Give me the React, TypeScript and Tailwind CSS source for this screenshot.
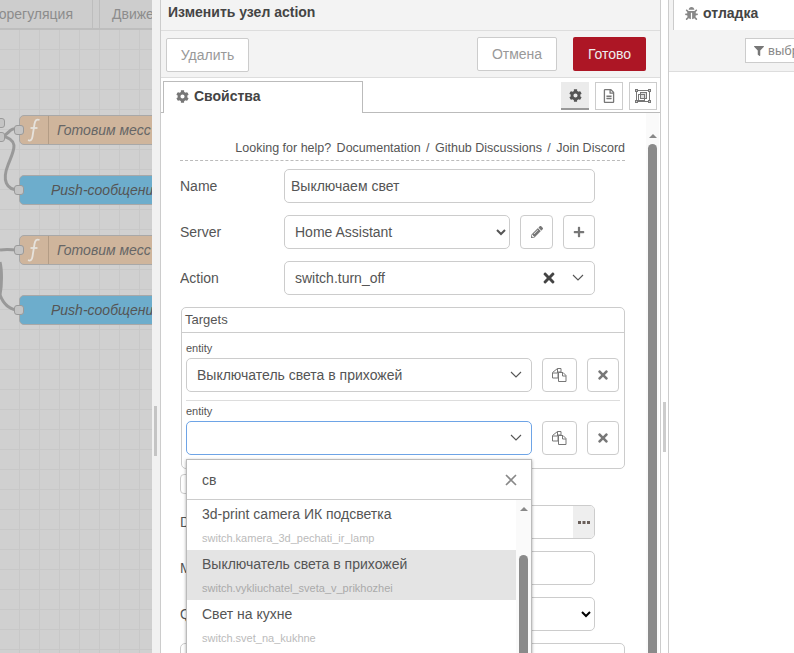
import { FaCog, FaBug, FaFilter, FaPencilAlt, FaPlus, FaTimes, FaRegFileAlt } from "react-icons/fa";

function Chevron() {
  return (
    <svg width="12" height="8" viewBox="0 0 12 8" fill="none" stroke="#555" strokeWidth="1.1">
      <path d="M1 1l5 5 5-5" />
    </svg>
  );
}

function CopyIcon() {
  return (
    <svg width="15" height="14" viewBox="0 0 15 14" fill="none" stroke="#777" strokeWidth="1">
      <path d="M5.5 0.5h3.5v3.5h-3v6h-5.5v-5.5z" />
      <path d="M1 5h4.5v-4.5" />
      <path d="M6.5 4.5h4.5l3 3v6h-7.500z" />
      <path d="M10.500 4.500v3.500h3.500" />
    </svg>
  );
}

function Dots() {
  return (
    <svg width="12" height="3" viewBox="0 0 12 3" fill="#6a5f5a">
      <rect x="0" y="0" width="3" height="3" />
      <rect x="4.500" y="0" width="3" height="3" />
      <rect x="9" y="0" width="3" height="3" />
    </svg>
  );
}

function Arrow() {
  return <div className="w-0 h-0 border-l-[4px] border-r-[4px] border-b-[4px] border-l-transparent border-r-transparent border-b-[#888]" />;
}

function Port({ className }: { className: string }) {
  return <div className={`absolute w-[10px] h-[10px] rounded-[3px] bg-[#c4c4c4] border border-[#9a9a9a] ${className}`} />;
}

function FnIcon() {
  return (
    <svg width="14" height="24" viewBox="0 0 14 24" fill="none" stroke="#e6e2dc" strokeWidth="1.8">
      <path d="M12.500 2C9.500 0.800 8 2.500 7.500 6L5.500 18.500C5 22 3.500 23.200 1 22.200" />
      <path d="M3.500 10H10.500" />
    </svg>
  );
}

function FnNode({ top }: { top: string }) {
  return (
    <div className={`absolute left-[19px] ${top} w-[160px] h-[30px] rounded-[5px] border border-[#a8a8a8] bg-[#cfb59c] flex items-center`}>
      <div className="w-[29px] h-full border-r border-[#b39c85] flex items-center justify-center"><FnIcon /></div>
      <span className="ml-[8px] italic text-[14px] text-[#666] whitespace-nowrap">Готовим месс</span>
    </div>
  );
}

function PushNode({ top }: { top: string }) {
  return (
    <div className={`absolute left-[19px] ${top} w-[160px] h-[30px] rounded-[5px] border border-[#a8a8a8] bg-[#6dadcc] flex items-center`}>
      <span className="ml-[31px] italic text-[14px] text-[#555] whitespace-nowrap">Push-сообщени</span>
    </div>
  );
}

function Canvas() {
  return (
    <div className="relative w-[152px] h-full shrink-0 overflow-hidden bg-[#d0d0d0]">
      <div className="h-[30px] flex bg-[#cdcdcd] border-b-2 border-[#bdbdbd] text-[14px] text-[#8c8c8c]">
        <div className="w-[93px] h-full border-r border-[#bdbdbd] flex items-center justify-end pr-[19px] whitespace-nowrap overflow-hidden">орегуляция</div>
        <div className="w-[6px]" />
        <div className="flex-1 h-full border-l border-[#bdbdbd] flex items-center pl-[12px] whitespace-nowrap overflow-hidden">Движе</div>
      </div>
      <div className="absolute left-0 right-0 top-[30px] bottom-0 bg-[linear-gradient(to_right,transparent_19px,#c8c8c8_19px,#c8c8c8_20px,transparent_20px),linear-gradient(to_bottom,transparent_19px,#c8c8c8_19px,#c8c8c8_20px,transparent_20px)] bg-[length:20px_20px]" />
      <svg className="absolute left-0 top-0" width="152" height="653" fill="none" stroke="#999" strokeWidth="3">
        <path d="M0 137C8 137 10 125 19 130" />
        <path d="M2 136C20 140 14 150 8 165C2 180 6 190 19 190" />
        <path d="M0 250C8 249 12 250 19 250" />
        <path d="M0 295C4 305 10 310 19 310" />
        <path d="M0 262C2 270 2 285 0 295" />
      </svg>
      <FnNode top="top-[115px]" />
      <PushNode top="top-[175px]" />
      <FnNode top="top-[235px]" />
      <PushNode top="top-[295px]" />
      <Port className="left-[-5px] top-[118px]" />
      <Port className="left-[-5px] top-[132px]" />
      <Port className="left-[14px] top-[125px]" />
      <Port className="left-[14px] top-[185px]" />
      <Port className="left-[14px] top-[245px]" />
      <Port className="left-[14px] top-[305px]" />
    </div>
  );
}

function Field({ label, children }: { label: string; children: React.ReactNode }) {
  return (
    <div className="flex h-[34px] mb-[12px] items-center shrink-0">
      <div className="w-[104px] shrink-0 text-[14px] text-[#555] whitespace-nowrap overflow-hidden">{label}</div>
      {children}
    </div>
  );
}

function IconBtn({ w, children }: { w: string; children: React.ReactNode }) {
  return <div className={`${w} h-[34px] shrink-0 bg-white border border-[#ccc] rounded-[4px] flex items-center justify-center text-[#777]`}>{children}</div>;
}

function EntityRow({ focus, value }: { focus?: boolean; value?: string }) {
  return (
    <div className="flex items-center">
      <div className={`w-[346px] h-[34px] rounded-[5px] border ${focus ? "border-[#6ea4e6]" : "border-[#ccc]"} flex items-center justify-between pl-[10px] pr-[9px] text-[14px] text-[#555]`}>
        <span>{value}</span>
        <Chevron />
      </div>
      <div className="ml-[10px]"><IconBtn w="w-[35px]"><CopyIcon /></IconBtn></div>
      <div className="ml-[10px]"><IconBtn w="w-[32px]"><FaTimes size={14} /></IconBtn></div>
    </div>
  );
}

function Option({ title, sub, active }: { title: string; sub: string; active?: boolean }) {
  return (
    <div className={`h-[50px] pl-[15px] pt-[5px] shrink-0 ${active ? "bg-[#e4e4e4]" : ""}`}>
      <div className="text-[14px] leading-[18px] text-[#555] whitespace-nowrap">{title}</div>
      <div className={`text-[11px] leading-[14px] mt-[8px] whitespace-nowrap ${active ? "text-[#aaa]" : "text-[#bbb]"}`}>{sub}</div>
    </div>
  );
}

function ThinTimes() {
  return (
    <svg width="14" height="14" viewBox="0 0 14 14" stroke="#888" strokeWidth="1.6" fill="none">
      <path d="M2 2l10 10M12 2L2 12" />
    </svg>
  );
}

function Dropdown() {
  return (
    <div className="absolute left-[25px] top-[346px] w-[346px] h-[210px] bg-white border border-[#bbb] shadow-[0_1px_3px_rgba(0,0,0,0.35)] flex flex-col z-10">
      <div className="h-[40px] shrink-0 border-b border-[#ccc] flex items-center justify-between pl-[15px] pr-[13px] pt-[1px] text-[14px] text-[#555]">
        <span>св</span>
        <ThinTimes />
      </div>
      <div className="flex flex-1 min-h-0">
        <div className="flex-1 flex flex-col min-w-0">
          <Option title="3d-print camera ИК подсветка" sub="switch.kamera_3d_pechati_ir_lamp" />
          <Option title="Выключатель света в прихожей" sub="switch.vykliuchatel_sveta_v_prikhozhei" active />
          <Option title="Свет на кухне" sub="switch.svet_na_kukhne" />
        </div>
        <div className="w-[15px] shrink-0 bg-[#fafafa] flex flex-col items-center pt-[7px]">
          <Arrow />
          <div className="w-[9px] flex-1 mt-[44px] rounded-t-[5px] bg-[#8a8a8a]" />
        </div>
      </div>
    </div>
  );
}

function Form() {
  return (
    <div className="relative flex-1 min-h-0 overflow-hidden bg-white flex">
      <div className="w-[485px] shrink-0 pl-[19px] flex flex-col">
        <div className="h-[48px] w-[445px] shrink-0 border-b border-dashed border-[#bbb] flex items-end justify-end gap-[5.4px] pb-[4px] text-[12.5px] leading-[16px] text-[#555] whitespace-nowrap">
          <span>Looking for help?</span>
          <span>Documentation</span>
          <span>/</span>
          <span>Github Discussions</span>
          <span>/</span>
          <span>Join Discord</span>
        </div>
        <div className="h-[8px] shrink-0" />
        <Field label="Name">
          <div className="w-[311px] h-[34px] border border-[#ccc] rounded-[5px] flex items-center pl-[6px] text-[14px] text-[#555]">Выключаем свет</div>
        </Field>
        <Field label="Server">
          <select className="w-[226px] h-[34px] border border-[#ccc] rounded-[5px] pl-[6px] text-[14px] text-[#555] bg-white" defaultValue="ha">
            <option value="ha">Home Assistant</option>
          </select>
          <div className="ml-[10px]"><IconBtn w="w-[33px]"><FaPencilAlt size={12} /></IconBtn></div>
          <div className="ml-[10px]"><IconBtn w="w-[32px]"><FaPlus size={12} /></IconBtn></div>
        </Field>
        <Field label="Action">
          <div className="w-[311px] h-[34px] border border-[#ccc] rounded-[5px] flex items-center pl-[10px] pr-[10px] text-[14px] text-[#555]">
            <span className="flex-1">switch.turn_off</span>
            <FaTimes size={16} className="text-[#444] mr-[15px]" />
            <Chevron />
          </div>
        </Field>
        <div className="w-[444px] h-[162px] shrink-0 ml-[1px] border border-[#ccc] rounded-[5px] flex flex-col">
          <div className="h-[25px] shrink-0 border-b border-[#ccc] pl-[3px] flex items-center text-[13px] text-[#555]">Targets</div>
          <div className="px-[4px] flex flex-col">
            <div className="text-[11px] leading-[13px] text-[#555] mt-[9px] mb-[3px]">entity</div>
            <EntityRow value="Выключатель света в прихожей" />
            <div className="h-px bg-[#ddd] mt-[8px]" />
            <div className="text-[11px] leading-[13px] text-[#555] mt-[4px] mb-[3px]">entity</div>
            <EntityRow focus />
          </div>
        </div>
        <div className="w-[60px] h-[20px] shrink-0 mt-[5px] mb-[11px] border border-[#ccc] rounded-[4px] bg-white" />
        <Field label="Data">
          <div className="w-[311px] h-[34px] border border-[#ccc] rounded-[5px] overflow-hidden flex justify-end">
            <div className="w-[21px] h-full bg-[#eee] flex items-center justify-center"><Dots /></div>
          </div>
        </Field>
        <Field label="Merge context">
          <div className="w-[311px] h-[34px] border border-[#ccc] rounded-[5px]" />
        </Field>
        <Field label="Queue">
          <select className="w-[311px] h-[34px] border border-[#ccc] rounded-[5px] bg-white" />
        </Field>
        <div className="w-[445px] h-[40px] shrink-0 border border-[#ccc] rounded-[5px]" />
      </div>
      <div className="w-[13px] shrink-0 bg-[#fafafa] flex flex-col items-center pt-[21px]">
        <Arrow />
        <div className="w-[9px] flex-1 mt-[6px] rounded-t-[5px] bg-[#8a8a8a]" />
      </div>
      <Dropdown />
    </div>
  );
}

function Tray() {
  return (
    <div className="w-[509px] h-full shrink-0 flex bg-[#f1f1f1] relative">
      <div className="w-[8px] h-full shrink-0 flex items-center pl-[2px]">
        <div className="w-[3px] h-[50px] bg-[#c4c4c4] mt-[208px]" />
      </div>
      <div className="w-[501px] h-full flex flex-col border-l border-r border-[#ccc] bg-white">
        <div className="h-[31px] shrink-0 bg-[#f3f3f3] border-b border-[#ddd] flex items-center pl-[7px] pb-[5px] text-[14px] font-bold text-[#444]">Изменить узел action</div>
        <div className="h-[47px] shrink-0 bg-[#f3f3f3] border-b border-[#ddd] flex items-start pl-[5px] pr-[14px] pt-[6px] text-[14px]">
          <div className="w-[83px] h-[34px] mt-[1px] bg-white border border-[#ccc] rounded-[2px] flex items-center justify-center text-[#999]">Удалить</div>
          <div className="flex-1" />
          <div className="w-[80px] h-[34px] bg-white border border-[#ccc] rounded-[2px] flex items-center justify-center text-[#999]">Отмена</div>
          <div className="w-[73px] h-[34px] ml-[16px] bg-[#ad1625] rounded-[2px] flex items-center justify-center text-[#eee]">Готово</div>
        </div>
        <div className="h-[35px] shrink-0 bg-white border-b border-[#bbb] flex pl-[2px] pt-[3px] pr-[3px]">
          <div className="w-[200px] h-[32px] bg-white border border-b-0 border-[#bbb] flex items-center pl-[12px] pb-[2px] gap-[5px] text-[14px] font-bold text-[#444]">
            <FaCog size={13} className="text-[#777]" />
            <span>Свойства</span>
          </div>
          <div className="flex-1" />
          <div className="w-[28px] h-[28px] mt-px bg-[#ebebeb] border-b-2 border-[#999] flex items-center justify-center text-[#555]"><FaCog size={13} /></div>
          <div className="w-[28px] h-[28px] mt-px ml-[6px] border border-[#ccc] flex items-center justify-center text-[#777]"><FaRegFileAlt size={14} /></div>
          <div className="w-[28px] h-[28px] mt-px ml-[6px] border border-[#ccc] flex items-center justify-center">
            <svg width="16" height="14" viewBox="0 0 16 14" fill="none" stroke="#777" strokeWidth="1">
              <rect x="1.5" y="1.5" width="13" height="11" />
              <rect x="5.5" y="3.5" width="6" height="6" fill="#ddd" />
              <rect x="3.5" y="5.5" width="6" height="6" />
              <rect x="0.5" y="0.5" width="2" height="2" fill="#ccc" />
              <rect x="13.5" y="0.5" width="2" height="2" fill="#ccc" />
              <rect x="0.5" y="11.5" width="2" height="2" fill="#ccc" />
              <rect x="13.5" y="11.5" width="2" height="2" fill="#ccc" />
            </svg>
          </div>
        </div>
        <Form />
      </div>
    </div>
  );
}

function Sidebar() {
  return (
    <div className="flex-1 h-full min-w-0 flex bg-[#f3f3f3]">
      <div className="w-[8px] h-full shrink-0 bg-white flex items-center justify-center border-r border-[#ccc]">
        <div className="w-[3px] h-[50px] bg-[#ccc] mt-[201px]" />
      </div>
      <div className="flex-1 min-w-0 flex flex-col">
        <div className="h-[30px] shrink-0 flex pl-[4px] bg-[#f3f3f3]">
          <div className="flex-1 h-[30px] bg-white border-l border-[#ccc] flex items-center pl-[11px] pb-[4px] gap-[5px] text-[14px] font-bold text-[#444] whitespace-nowrap">
            <FaBug size={13} className="text-[#888]" />
            <span>отладка</span>
          </div>
        </div>
        <div className="h-[42px] shrink-0 border-b border-[#ddd] flex items-start pt-[8px] pl-[76px] overflow-hidden">
          <div className="w-[110px] h-[25px] shrink-0 bg-white border border-[#ccc] flex items-center pl-[8px] gap-[4px] text-[13px] text-[#888] whitespace-nowrap">
            <FaFilter size={10} className="text-[#777] shrink-0" />
            <span>выбранные</span>
          </div>
        </div>
        <div className="flex-1 bg-white" />
      </div>
    </div>
  );
}

export default function App() {
  return (
    <div className="w-[794px] h-[653px] overflow-hidden flex font-['Liberation_Sans',sans-serif] bg-white">
      <Canvas />
      <Tray />
      <Sidebar />
    </div>
  );
}
